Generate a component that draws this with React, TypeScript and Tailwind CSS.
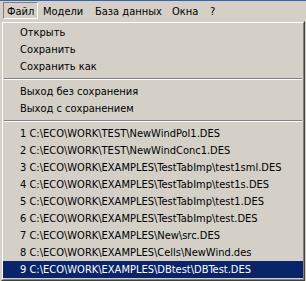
const files = [
  "1 C:\\ECO\\WORK\\TEST\\NewWindPol1.DES",
  "2 C:\\ECO\\WORK\\TEST\\NewWindConc1.DES",
  "3 C:\\ECO\\WORK\\EXAMPLES\\TestTabImp\\test1sml.DES",
  "4 C:\\ECO\\WORK\\EXAMPLES\\TestTabImp\\test1s.DES",
  "5 C:\\ECO\\WORK\\EXAMPLES\\TestTabImp\\test1.DES",
  "6 C:\\ECO\\WORK\\EXAMPLES\\TestTabImp\\test.DES",
  "7 C:\\ECO\\WORK\\EXAMPLES\\New\\src.DES",
  "8 C:\\ECO\\WORK\\EXAMPLES\\Cells\\NewWind.des",
  "9 C:\\ECO\\WORK\\EXAMPLES\\DBtest\\DBTest.DES",
];

function Item({ label, active }: { label: string; active?: boolean }) {
  return (
    <div
      className={
        "h-[17px] pl-[17px] leading-[17px] whitespace-nowrap " +
        (active ? "bg-[#0a246a] text-white" : "text-black")
      }
    >
      {label}
    </div>
  );
}

function Separator() {
  return (
    <div className="h-[8px] py-[3px] px-px">
      <div className="h-px bg-[#808080]" />
      <div className="h-px bg-white" />
    </div>
  );
}

export default function App() {
  return (
    <div className="w-[306px] h-[281px] overflow-hidden bg-[#d4d0c8] font-['DejaVu_Sans_Condensed','DejaVu_Sans',sans-serif] text-[11px]">
      <div className="h-px bg-[#3a63b0]" />
      {/* menu bar */}
      <div className="h-[20px] flex items-start pt-[1px] text-black">
        <div className="ml-[3px] w-[35px] h-[17px] pl-[3px] border border-t-[#808080] border-l-[#808080] border-b-white border-r-white leading-[15px] pt-px">
          Файл
        </div>
        <div className="ml-[5px] w-[52px] leading-[19px]">Модели</div>
        <div className="w-[77px] leading-[19px]">База данных</div>
        <div className="w-[38px] leading-[19px]">Окна</div>
        <div className="leading-[19px]">?</div>
      </div>
      {/* dropdown */}
      <div className="ml-px w-[304px] border border-t-[#d4d0c8] border-l-[#d4d0c8] border-b-[#404040] border-r-[#404040]">
        <div className="border border-t-white border-l-white border-b-[#808080] border-r-[#808080] pt-px pb-px">
          <Item label="Открыть" />
          <Item label="Сохранить" />
          <Item label="Сохранить как" />
          <Separator />
          <Item label="Выход без сохранения" />
          <Item label="Выход с сохранением" />
          <Separator />
          {files.map((f, i) => (
            <Item key={f} label={f} active={i === files.length - 1} />
          ))}
        </div>
      </div>
    </div>
  );
}
